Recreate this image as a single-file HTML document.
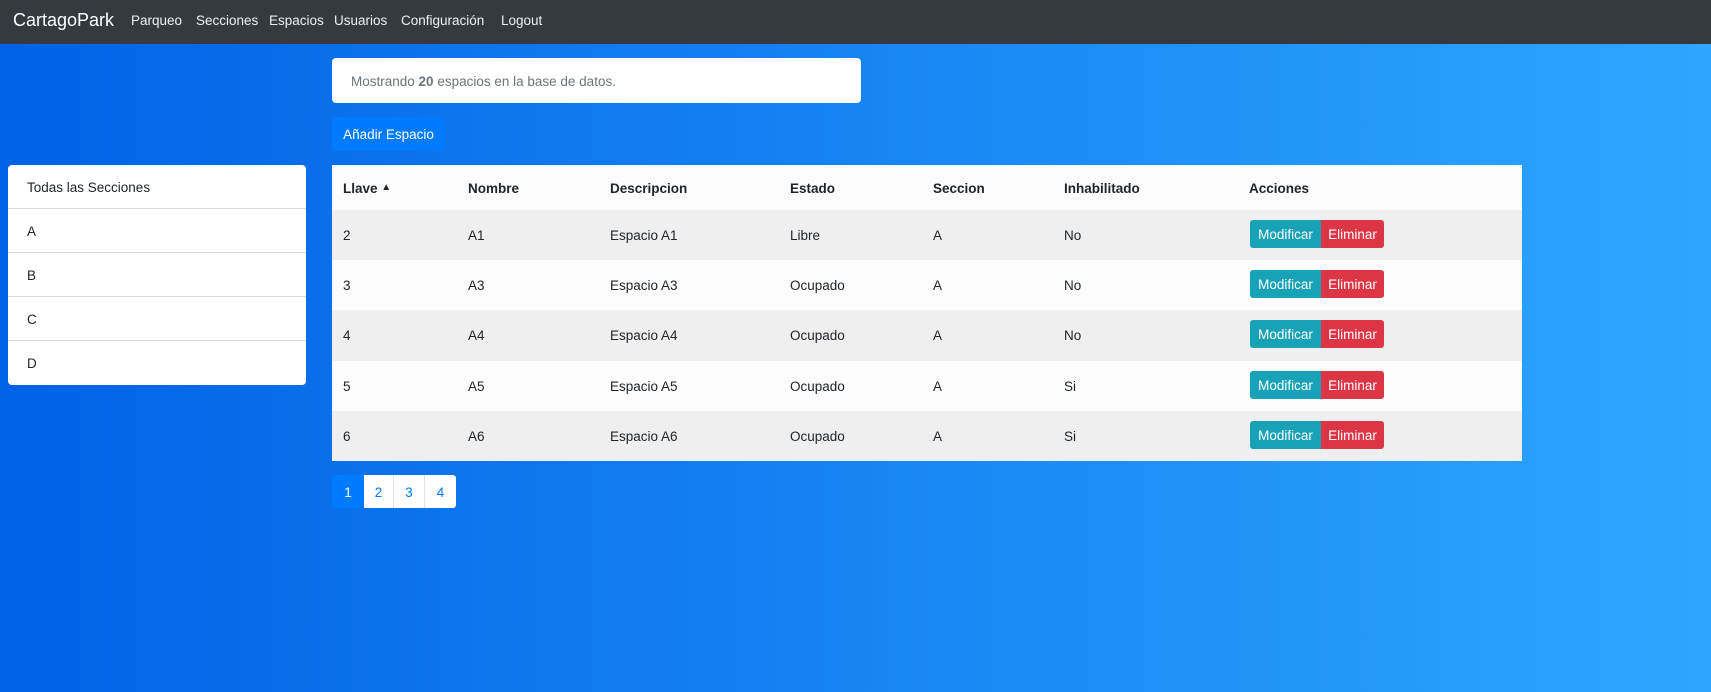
<!DOCTYPE html>
<html><head><meta charset="utf-8"><style>
*{box-sizing:border-box;margin:0;padding:0}
body{width:1711px;height:692px;overflow:hidden;font-family:"Segoe UI","Liberation Sans",sans-serif;font-size:13.5px;color:#212529;background:linear-gradient(to right,#0062e6,#2ea6ff);position:relative}
.nav{position:absolute;left:0;top:0;width:1711px;height:44px;background:#343a40;color:#fff}
.nav .brand{position:absolute;left:13px;top:10px;font-size:18px}
.nav a{position:absolute;top:13px;font-size:13.5px;color:rgba(255,255,255,.92)}
.box{position:absolute;background:#fff;border-radius:4px}
.info{left:332px;top:58px;width:529px;height:45px;color:#6c757d;padding:16px 19px}
.add{position:absolute;left:332px;top:117px;width:113px;height:34px;background:#007bff;color:#fff;border-radius:4px;text-align:center;line-height:36px}
.side{left:8px;top:165px;width:298px;height:220px}
.side div{height:44px;border-bottom:1px solid #dcdcdc;padding:15px 19px}
.side div:last-child{border:none}
.tbl{position:absolute;left:332px;top:165px;width:1190px;background:#fcfcfc}
.row{position:relative;height:50.2px}
.hdr{height:45px;font-weight:bold}
.row span{position:absolute;top:18px}
.hdr span{top:16px}
.odd{background:#efefef}
.b{position:absolute;top:10px;height:28px;color:#fff;line-height:29px;text-align:center}
.m{left:918px;width:71px;background:#17a2b8;border-radius:3px 0 0 3px}
.e{left:989px;width:63px;background:#dc3545;border-radius:0 3px 3px 0}
.pg{position:absolute;top:475px;height:33px;line-height:35px;text-align:center;background:#fff;color:#007bff;border-right:1px solid #dee2e6}
</style></head><body>
<div class="nav"><span class="brand">CartagoPark</span>
<a style="left:131px">Parqueo</a><a style="left:196px">Secciones</a><a style="left:269px">Espacios</a><a style="left:334px">Usuarios</a><a style="left:401px">Configuración</a><a style="left:501px">Logout</a></div>
<div class="box info">Mostrando <b>20</b> espacios en la base de datos.</div>
<div class="add">Añadir Espacio</div>
<div class="box side"><div>Todas las Secciones</div><div>A</div><div>B</div><div>C</div><div>D</div></div>
<div class="tbl">
<div class="row hdr"><span style="left:11px">Llave <span style="position:static;font-size:10px;vertical-align:3px">▲</span></span><span style="left:136px">Nombre</span><span style="left:278px">Descripcion</span><span style="left:458px">Estado</span><span style="left:601px">Seccion</span><span style="left:732px">Inhabilitado</span><span style="left:917px">Acciones</span></div>
<div class="row odd"><span style="left:11px">2</span><span style="left:136px">A1</span><span style="left:278px">Espacio A1</span><span style="left:458px">Libre</span><span style="left:601px">A</span><span style="left:732px">No</span><div class="b m">Modificar</div><div class="b e">Eliminar</div></div>
<div class="row"><span style="left:11px">3</span><span style="left:136px">A3</span><span style="left:278px">Espacio A3</span><span style="left:458px">Ocupado</span><span style="left:601px">A</span><span style="left:732px">No</span><div class="b m">Modificar</div><div class="b e">Eliminar</div></div>
<div class="row odd"><span style="left:11px">4</span><span style="left:136px">A4</span><span style="left:278px">Espacio A4</span><span style="left:458px">Ocupado</span><span style="left:601px">A</span><span style="left:732px">No</span><div class="b m">Modificar</div><div class="b e">Eliminar</div></div>
<div class="row"><span style="left:11px">5</span><span style="left:136px">A5</span><span style="left:278px">Espacio A5</span><span style="left:458px">Ocupado</span><span style="left:601px">A</span><span style="left:732px">Si</span><div class="b m">Modificar</div><div class="b e">Eliminar</div></div>
<div class="row odd"><span style="left:11px">6</span><span style="left:136px">A6</span><span style="left:278px">Espacio A6</span><span style="left:458px">Ocupado</span><span style="left:601px">A</span><span style="left:732px">Si</span><div class="b m">Modificar</div><div class="b e">Eliminar</div></div>
</div>
<div class="pg" style="left:332px;width:32px;background:#007bff;color:#fff;border-radius:3px 0 0 3px;border:none">1</div>
<div class="pg" style="left:364px;width:30px">2</div>
<div class="pg" style="left:394px;width:31px">3</div>
<div class="pg" style="left:425px;width:31px;border-radius:0 3px 3px 0;border:none">4</div>
</body></html>
